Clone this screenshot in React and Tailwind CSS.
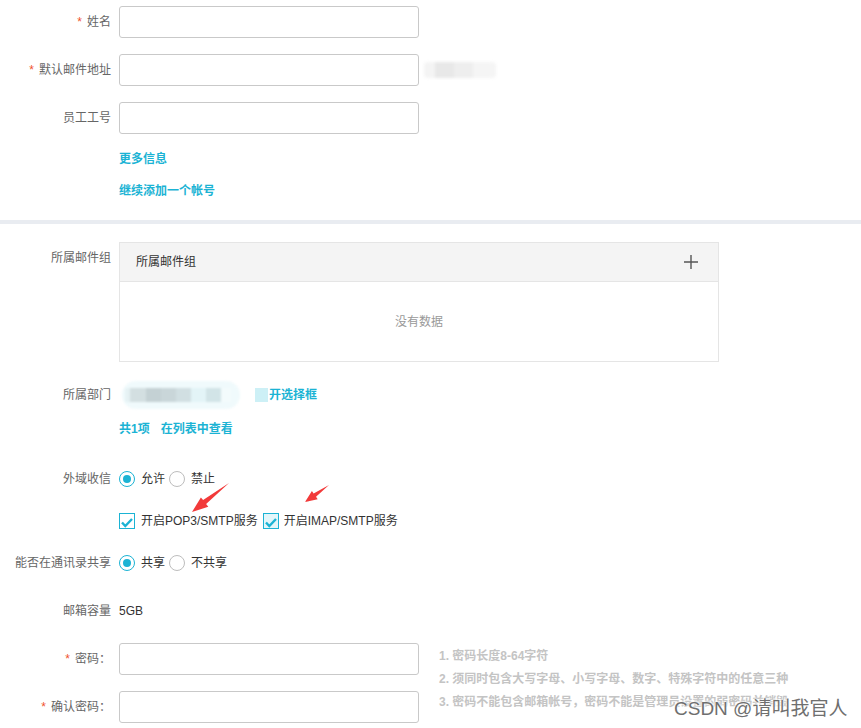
import React from "react";

function Label({ children, req, top }) {
  return (
    <div
      className={`w-[111px] shrink-0 text-right text-[12px] leading-4 text-[#666] ${top ? "pt-2" : ""}`}
    >
      {req && <span className="mr-[5px] text-[#f0522e]">*</span>}
      {children}
    </div>
  );
}

function Input() {
  return <div className="h-8 w-[300px] rounded-[3px] border border-[#c9c9c9] bg-white" />;
}

function Radio({ checked }) {
  return checked ? (
    <span className="flex h-4 w-4 shrink-0 items-center justify-center rounded-full border border-[#1bb3d4] bg-white">
      <span className="block h-2 w-2 rounded-full bg-[#1bb3d4]" />
    </span>
  ) : (
    <span className="block h-4 w-4 shrink-0 rounded-full border border-[#bdbdbd] bg-white" />
  );
}

function Check({ tinted }) {
  return (
    <span
      className={`flex h-4 w-4 shrink-0 items-center justify-center border border-[#1bb3d4] ${tinted ? "bg-[#e3f6fa]" : "bg-white"}`}
    >
      <svg className="block" width="14" height="14" viewBox="0 0 14 14">
        <path d="M2 8.5 L5.3 12 L12 5" fill="none" stroke="#1bb3d4" strokeWidth="2.4" />
      </svg>
    </span>
  );
}

export default function App() {
  return (
    <div className="relative h-[728px] w-[861px] overflow-hidden bg-white font-['Liberation_Sans','Noto_Sans_CJK_SC',sans-serif] text-[12px] leading-4 text-[#333]">
      {/* top section */}
      <div className="mt-[6px] flex items-center">
        <Label req>姓名</Label>
        <div className="ml-2">
          <Input />
        </div>
      </div>
      <div className="mt-4 flex items-center">
        <Label req>默认邮件地址</Label>
        <div className="ml-2">
          <Input />
        </div>
        <div className="ml-[5px] flex h-4 w-[72px] overflow-hidden rounded-sm blur-[1.5px]">
          <div className="w-3 bg-[#f4f4f4]" />
          <div className="w-5 bg-[#e8e8e8]" />
          <div className="w-5 bg-[#eeeeee]" />
          <div className="w-6 bg-[#f5f5f5]" />
        </div>
      </div>
      <div className="mt-4 flex items-center">
        <Label>员工工号</Label>
        <div className="ml-2">
          <Input />
        </div>
      </div>
      <div className="ml-[119px] mt-[17px] text-[12px] font-bold leading-4 text-[#1bb3d4]">更多信息</div>
      <div className="ml-[119px] mt-4 text-[12px] font-bold leading-4 text-[#1bb3d4]">继续添加一个帐号</div>

      <div className="mt-[21px] h-1 w-full bg-[#e9ecf1]" />

      {/* group table */}
      <div className="mt-[18px] flex items-start">
        <Label top>所属邮件组</Label>
        <div className="ml-2 w-[600px] border border-[#e5e5e5]">
          <div className="flex h-[39px] items-center justify-between border-b border-[#e5e5e5] bg-[#f4f4f4] pl-4 pr-5">
            <span className="text-[12px] text-[#333]">所属邮件组</span>
            <svg width="14" height="14" viewBox="0 0 14 14">
              <path d="M7 0 V14 M0 7 H14" stroke="#555" strokeWidth="1.4" />
            </svg>
          </div>
          <div className="flex h-[79px] items-center justify-center text-[12px] text-[#999]">没有数据</div>
        </div>
      </div>

      {/* dept */}
      <div className="mt-[19px] flex h-7 items-center">
        <Label>所属部门</Label>
        <div className="ml-[11px] flex h-7 w-[118px] items-center rounded-full bg-[#f0fafc] pl-[3px] blur-[1px]">
          <div className="flex h-[14px] overflow-hidden">
            <div className="w-[5px] bg-[#e6f2f4]" />
            <div className="w-4 bg-[#d3dfe1]" />
            <div className="w-[15px] bg-[#c4d1d4]" />
            <div className="w-[15px] bg-[#c9d6d9]" />
            <div className="w-[15px] bg-[#d1dfe2]" />
            <div className="w-[15px] bg-[#e3f4f7]" />
            <div className="w-[15px] bg-[#d2e4e7]" />
            <div className="w-[10px] bg-[#f3fbfc]" />
          </div>
        </div>
        <div className="ml-[15px] h-[14px] w-[13px] bg-[#cdf0f6]" />
        <span className="ml-px text-[12px] font-bold leading-4 text-[#1bb3d4]">开选择框</span>
      </div>
      <div className="ml-[119px] mt-[12px] flex text-[12px] font-bold leading-4 text-[#1bb3d4]">
        <span>共1项</span>
        <span className="ml-[11px]">在列表中查看</span>
      </div>

      {/* external mail */}
      <div className="mt-[34px] flex h-4 items-center">
        <Label>外域收信</Label>
        <div className="ml-2 flex h-4 items-center">
          <Radio checked />
          <span className="ml-[6px] leading-4">允许</span>
          <span className="ml-[4px] flex">
            <Radio />
          </span>
          <span className="ml-[6px] leading-4">禁止</span>
        </div>
      </div>
      <div className="ml-[119px] mt-[26px] flex h-4 items-center">
        <Check />
        <span className="ml-[6px] leading-4">开启POP3/SMTP服务</span>
        <span className="ml-[5px] flex">
          <Check tinted />
        </span>
        <span className="ml-[5px] leading-4">开启IMAP/SMTP服务</span>
      </div>

      <div className="mt-[26px] flex h-4 items-center">
        <Label>能否在通讯录共享</Label>
        <div className="ml-2 flex h-4 items-center">
          <Radio checked />
          <span className="ml-[6px] leading-4">共享</span>
          <span className="ml-[4px] flex">
            <Radio />
          </span>
          <span className="ml-[6px] leading-4">不共享</span>
        </div>
      </div>

      <div className="mt-8 flex h-4 items-center">
        <Label>邮箱容量</Label>
        <span className="ml-2 leading-4">5GB</span>
      </div>

      {/* password */}
      <div className="mt-[24px] flex items-start">
        <div className="flex flex-col gap-4">
          <div className="flex items-center">
            <Label req>密码：</Label>
            <div className="ml-2">
              <Input />
            </div>
          </div>
          <div className="flex items-center">
            <Label req>确认密码：</Label>
            <div className="ml-2">
              <Input />
            </div>
          </div>
        </div>
        <div className="ml-5 pt-[2px] text-[12px] font-bold leading-[23px] text-[#c4c4c4]">
          <div>1. 密码长度8-64字符</div>
          <div>2. 须同时包含大写字母、小写字母、数字、特殊字符中的任意三种</div>
          <div>3. 密码不能包含邮箱帐号，密码不能是管理员设置的弱密码并销毁</div>
        </div>
      </div>

      {/* arrows overlay */}
      <svg className="pointer-events-none absolute left-0 top-0" width="861" height="728">
        <polygon
          points="229,483 206.1,504.1 208.3,506.8 192,512 200.9,497.4 203.1,500.1"
          fill="#f23a3a"
        />
        <polygon
          points="329,485 316,496.7 317.7,499.2 305,502 311.9,491 313.6,493.5"
          fill="#f23a3a"
        />
      </svg>

      {/* watermark */}
      <div className="absolute left-[674px] top-[697px] text-[19px] leading-[24px] text-[#6f6f6f] [text-shadow:0_0_2px_#fff,0_0_2px_#fff,0_0_3px_#fff]">
        CSDN @请叫我官人
      </div>
    </div>
  );
}
